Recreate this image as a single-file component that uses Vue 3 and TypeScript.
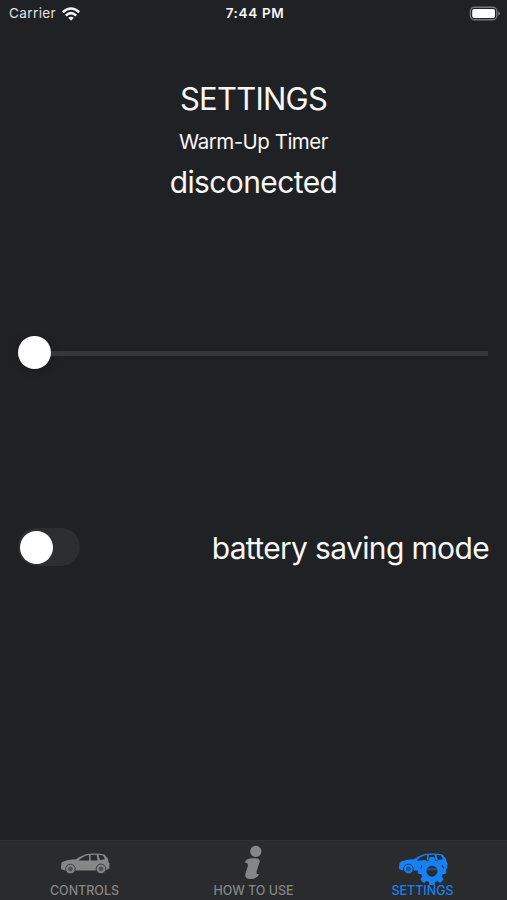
<script setup lang="ts">
import { ref } from 'vue'

type TabId = 'controls' | 'help' | 'settings'
const tabs: { id: TabId; label: string }[] = [
  { id: 'controls', label: 'CONTROLS' },
  { id: 'help', label: 'HOW TO USE' },
  { id: 'settings', label: 'SETTINGS' },
]
const active = ref<TabId>('settings')
const saving = ref(false)
const teeth = [0, 45, 90, 135, 180, 225, 270, 315]
</script>

<template>
  <div class="screen">
    <header class="status">
      <div class="carrier">
        <span>Carrier</span>
        <svg class="wifi" viewBox="0 0 18 14" width="18" height="14">
          <g fill="none" stroke="#f4f4f4" stroke-width="2.5">
            <path d="M.8 5.2Q9-2.2 17.2 5.2" />
            <path d="M3.8 8.6Q9 3.6 14.2 8.6" />
          </g>
          <path d="M6.2 10.8Q9 8.5 11.8 10.8L9 13.8Z" fill="#f4f4f4" />
        </svg>
      </div>
      <span class="time">7:44 PM</span>
      <svg class="battery" viewBox="0 0 32 16" width="32" height="16">
        <rect x="1.4" y="1.2" width="26.4" height="12.6" rx="4" fill="none" stroke="#77787b" stroke-width="1.4" />
        <rect x="3.2" y="3" width="22.8" height="9" rx="2" fill="#fff" />
        <path d="M29.2 5.2Q31 6 31 7.4T29.2 9.6Z" fill="#77787b" />
      </svg>
    </header>

    <main class="content">
      <h1 class="title">SETTINGS</h1>
      <p class="subtitle">Warm-Up Timer</p>
      <p class="state">disconected</p>
      <div class="slider">
        <span class="thumb"></span>
        <span class="track"></span>
      </div>
      <div class="row">
        <button class="switch" :class="{ on: saving }" role="switch" :aria-checked="saving" @click="saving = !saving">
          <span class="knob"></span>
        </button>
        <span class="mode">battery saving mode</span>
      </div>
    </main>

    <nav class="tabs">
      <button v-for="tab in tabs" :key="tab.id" class="tab" :class="{ active: active === tab.id }" @click="active = tab.id">
        <svg class="icon" viewBox="0 0 54 40" width="54" height="40">
          <g v-if="tab.id !== 'help'">
            <path
              fill="currentColor"
              fill-rule="evenodd"
              d="M3 22L3.6 17.5Q8 14.6 18 14.3Q25 9.5 31 8.8Q40 8 46.5 9.6L49.8 13.5L50.6 17L51.6 18.5L51.2 23.6L47.8 25.4H7L3.2 24.2ZM20.6 15.4H31V10Q25.8 10.6 20.6 15.4ZM32.6 10V15.4H39.6L38.6 9.8ZM40.4 9.9L42 15L46.8 14.2Q46 11.4 44.4 10.3Z"
            />
            <g class="wheel" fill="currentColor" stroke-width="0.8">
              <circle cx="12.4" cy="24" r="4.8" />
              <circle cx="43" cy="23.9" r="4.8" />
            </g>
            <g class="hub">
              <circle cx="12.4" cy="24" r="2.4" />
              <circle cx="43" cy="23.9" r="2.4" />
            </g>
          </g>
          <path
            v-if="tab.id === 'help'"
            fill="currentColor"
            d="M28.8 .8A5.6 5.6 0 1 1 28.79 .8ZM17.8 17.6C18.8 14.4 22 13.3 26 13.3C30.5 13.2 33.4 13.8 32.6 17L29.6 26.4C29 28.8 30 29.4 31.9 28.8C31.4 32.2 27.5 34.2 23.3 34.1C19 34 17.4 31.7 18.6 28L20.8 21.2C21.3 18.8 20.3 17.8 17.8 17.6Z"
          />
          <g v-if="tab.id === 'settings'" fill="currentColor" transform="translate(36 26.2)">
            <circle class="halo" r="12" />
            <rect v-for="angle in teeth" :key="angle" x="-2.9" y="-14.2" width="5.8" height="6" rx="1.6" :transform="`rotate(${angle})`" />
            <path fill-rule="evenodd" d="M-11.2 0A11.2 11.2 0 1 1 11.2 0A11.2 11.2 0 1 1-11.2 0M-5.5 0A5.5 5.5 0 1 0 5.5 0A5.5 5.5 0 1 0-5.5 0" />
            <path class="hub" d="M-4.6-3H4.6L5.2-1H-5.2Z" />
          </g>
        </svg>
        <span class="label">{{ tab.label }}</span>
      </button>
    </nav>
  </div>
</template>

<style>
body {
  background: #202124;
}
</style>

<style scoped>
.screen {
  width: 507px;
  height: 900px;
  display: flex;
  flex-direction: column;
  overflow: hidden;
  background: #202124;
  color: #f7f7f7;
  font-family: Inter, 'Liberation Sans', sans-serif;
}
button {
  border: 0;
  padding: 0;
  background: none;
  font: inherit;
}
h1,
p {
  margin: 0;
  font-weight: 400;
  white-space: nowrap;
}
.status {
  height: 28px;
  flex: none;
  display: grid;
  grid-template-columns: 1fr auto 1fr;
  align-items: center;
  padding: 0 6px 1px 9px;
  box-sizing: border-box;
  font-size: 13.5px;
  line-height: 27px;
}
.carrier {
  display: flex;
  align-items: center;
  gap: 6px;
  color: #e1e1e1;
  letter-spacing: 0.4px;
}
.time {
  font-weight: 600;
  letter-spacing: 0.65px;
}
.battery {
  justify-self: end;
}
.content {
  flex: 1;
  display: flex;
  flex-direction: column;
  align-items: center;
}
.title {
  margin-top: 51px;
  font-size: 31px;
  line-height: 40px;
  letter-spacing: -0.75px;
}
.subtitle {
  margin-top: 8px;
  font-size: 20.5px;
  line-height: 30px;
  letter-spacing: -0.5px;
}
.state {
  margin-top: 5px;
  font-size: 30px;
  line-height: 40px;
  letter-spacing: -0.6px;
}
.slider {
  align-self: stretch;
  display: flex;
  align-items: center;
  height: 34px;
  margin: 133px 19px 0 18px;
}
.thumb {
  width: 33px;
  height: 33px;
  border-radius: 50%;
  background: #fff;
  box-shadow: 0 2px 8px rgba(0, 0, 0, 0.18);
}
.track {
  flex: 1;
  height: 5px;
  margin-top: 2px;
  background: #353639;
}
.row {
  align-self: stretch;
  display: flex;
  align-items: center;
  justify-content: space-between;
  height: 40px;
  margin: 158px 18px 0 18px;
}
.switch {
  width: 62px;
  height: 38px;
  display: flex;
  align-items: center;
  padding: 0 2px;
  border-radius: 19px;
  background: #2c2e30;
}
.switch.on {
  justify-content: flex-end;
  background: #30d158;
}
.knob {
  width: 33px;
  height: 33px;
  border-radius: 50%;
  background: #fff;
}
.mode {
  padding-top: 2px;
  font-size: 30px;
  line-height: 40px;
  letter-spacing: -0.65px;
  white-space: nowrap;
}
.tabs {
  height: 60px;
  flex: none;
  display: grid;
  grid-template-columns: repeat(3, 1fr);
  box-sizing: border-box;
  border-top: 1px solid #303234;
  background: #292b2c;
}
.tab {
  display: flex;
  flex-direction: column;
  align-items: center;
  color: #858686;
}
.tab.active {
  color: #1681f5;
}
.icon {
  flex: none;
  margin-top: 4px;
}
.wheel {
  stroke: #292b2c;
}
.hub {
  fill: #505253;
}
.tab.active .hub {
  fill: #1c5695;
}
.halo {
  fill: #292b2c;
}
.label {
  margin-top: -3px;
  font-size: 12.5px;
  font-weight: 500;
  line-height: 18px;
  white-space: nowrap;
}
</style>
